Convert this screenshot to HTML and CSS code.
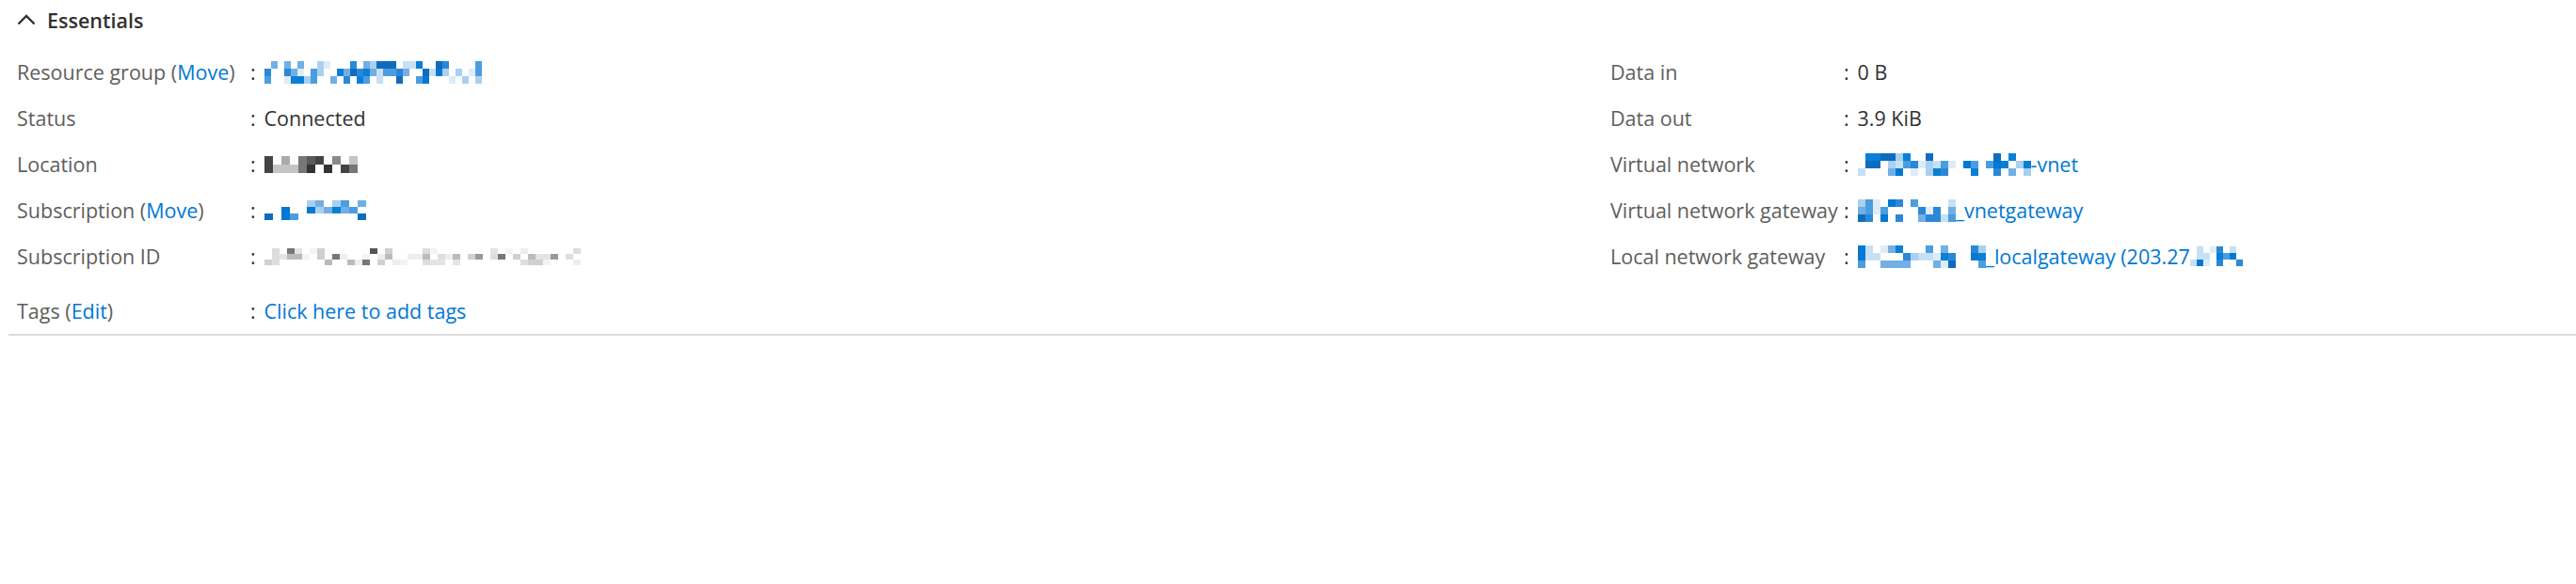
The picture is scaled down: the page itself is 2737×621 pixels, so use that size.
FILE: index.html
```html
<!DOCTYPE html>
<html lang="en">
<head>
<meta charset="utf-8">
<title>Connection - Essentials</title>
<link rel="stylesheet" href="styles.css">
</head>
<body>
<section class="essentials">
  <div class="header">
    <svg class="chev" viewBox="0 0 20 12" width="20" height="12"><polyline points="1.5,10.5 10,2 18.5,10.5" fill="none" stroke="#323130" stroke-width="2.4"/></svg>
    <span class="title">Essentials</span>
  </div>
  <div class="grid">
    <div class="col">
      <div class="row"><span class="label">Resource group (<a href="#">Move</a>)</span><span class="sep">:</span><a class="value" href="#"><span class="mosaic" data-cols="33" data-rows="3" data-bw="7" data-bh="8" data-seed="11" data-pal="blue" data-density="0.55"></span></a></div>
      <div class="row"><span class="label">Status</span><span class="sep">:</span><span class="value">Connected</span></div>
      <div class="row"><span class="label">Location</span><span class="sep">:</span><span class="value"><span class="mosaic" data-cols="11" data-rows="2" data-bw="9" data-bh="9" data-seed="5" data-pal="gray" data-density="0.6"></span></span></div>
      <div class="row"><span class="label">Subscription (<a href="#">Move</a>)</span><span class="sep">:</span><a class="value" href="#"><span class="mosaic" data-cols="12" data-rows="3" data-bw="9" data-bh="7" data-seed="23" data-pal="blue" data-density="0.5"></span></a></div>
      <div class="row"><span class="label">Subscription ID</span><span class="sep">:</span><span class="value"><span class="mosaic" data-cols="42" data-rows="3" data-bw="8" data-bh="6" data-seed="37" data-pal="light" data-density="0.45"></span></span></div>
    </div>
    <div class="col">
      <div class="row"><span class="label">Data in</span><span class="sep">:</span><span class="value">0 B</span></div>
      <div class="row"><span class="label">Data out</span><span class="sep">:</span><span class="value">3.9 KiB</span></div>
      <div class="row"><span class="label">Virtual network</span><span class="sep">:</span><a class="value" href="#"><span class="mosaic" data-cols="23" data-rows="3" data-bw="8" data-bh="8" data-seed="41" data-pal="blue" data-density="0.6"></span>-vnet</a></div>
      <div class="row"><span class="label">Virtual network gateway</span><span class="sep">:</span><a class="value" href="#"><span class="mosaic" data-cols="13" data-rows="3" data-bw="8" data-bh="8" data-seed="53" data-pal="blue" data-density="0.55"></span>_vnetgateway</a></div>
      <div class="row"><span class="label">Local network gateway</span><span class="sep">:</span><a class="value" href="#"><span class="mosaic" data-cols="17" data-rows="3" data-bw="8" data-bh="8" data-seed="67" data-pal="blue" data-density="0.6"></span>_localgateway (203.27<span class="mosaic" data-cols="8" data-rows="3" data-bw="7" data-bh="7" data-seed="79" data-pal="blue" data-density="0.5"></span></a></div>
    </div>
  </div>
  <div class="row tags"><span class="label">Tags (<a href="#">Edit</a>)</span><span class="sep">:</span><a class="value" href="#">Click here to add tags</a></div>
</section>
<script src="script.js"></script>
</body>
</html>
```

FILE: styles.css
```css
* { box-sizing: border-box; }
html, body { margin: 0; padding: 0; background: #ffffff; }
body {
  font-family: "Segoe UI", "Open Sans", "Noto Sans", sans-serif;
  font-size: 21.5px;
  color: #323130;
}
a { color: #0078d4; text-decoration: none; }

.essentials {
  margin-left: 9px;
  padding-left: 9px;
  border-bottom: 2px solid #dcdcdc;
}
.header {
  height: 42px;
  display: flex;
  align-items: center;
  gap: 12px;
}
.chev { display: block; flex: none; }
.title { font-weight: 600; color: #323130; }

.grid {
  display: grid;
  grid-template-columns: 1693px 1fr;
  margin-top: 10px;
}
.row {
  display: flex;
  align-items: center;
  height: 49px;
  white-space: nowrap;
}
.label {
  flex: none;
  width: 245px;
  color: #605e5c;
}
.sep {
  flex: none;
  width: 17.5px;
  padding-left: 3px;
  color: #323130;
}
.value {
  display: inline-flex;
  align-items: center;
}
.mosaic { display: inline-flex; }
.mosaic svg { display: block; }
.tags { margin-top: 8.5px; }
```

FILE: script.js
```js
(function () {
  function rng(seed) {
    var s = seed * 7919 + 17;
    return function () {
      s = (s * 1103515245 + 12345) & 0x7fffffff;
      return s / 0x7fffffff;
    };
  }
  var palettes = {
    blue: ['#0078d4', '#0a7fd6', '#2b88d8', '#4a9ee0', '#71afe5', '#a9d0f0', '#c7e0f4', '#deecf9', '#0f6cbd'],
    gray: ['#2f2f2f', '#444444', '#5a5a5a', '#777777', '#8a8a8a', '#aaaaaa', '#c4c4c4', '#333333'],
    light: ['#555555', '#777777', '#999999', '#bbbbbb', '#d0d0d0', '#e4e4e4', '#eeeeee', '#f4f4f4', '#dddddd']
  };
  var ns = 'http://www.w3.org/2000/svg';
  document.querySelectorAll('.mosaic').forEach(function (el) {
    var cols = +el.dataset.cols, rows = +el.dataset.rows;
    var bw = +el.dataset.bw || 7, bh = +el.dataset.bh || 8;
    var r = rng(+el.dataset.seed || 1);
    var pal = palettes[el.dataset.pal || 'blue'];
    var density = +el.dataset.density || 0.55;
    var svg = document.createElementNS(ns, 'svg');
    svg.setAttribute('width', cols * bw);
    svg.setAttribute('height', rows * bh);
    svg.setAttribute('shape-rendering', 'crispEdges');
    for (var y = 0; y < rows; y++) {
      for (var x = 0; x < cols; x++) {
        var d = density * (y === 1 ? 1.25 : 0.85);
        var forced = (x === 0 || x === cols - 1) && y === rows - 1;
        if (forced || r() < d) {
          var rect = document.createElementNS(ns, 'rect');
          rect.setAttribute('x', x * bw);
          rect.setAttribute('y', y * bh);
          rect.setAttribute('width', bw);
          rect.setAttribute('height', bh);
          rect.setAttribute('fill', pal[Math.floor(r() * pal.length)]);
          svg.appendChild(rect);
        }
      }
    }
    el.appendChild(svg);
  });
})();
```
